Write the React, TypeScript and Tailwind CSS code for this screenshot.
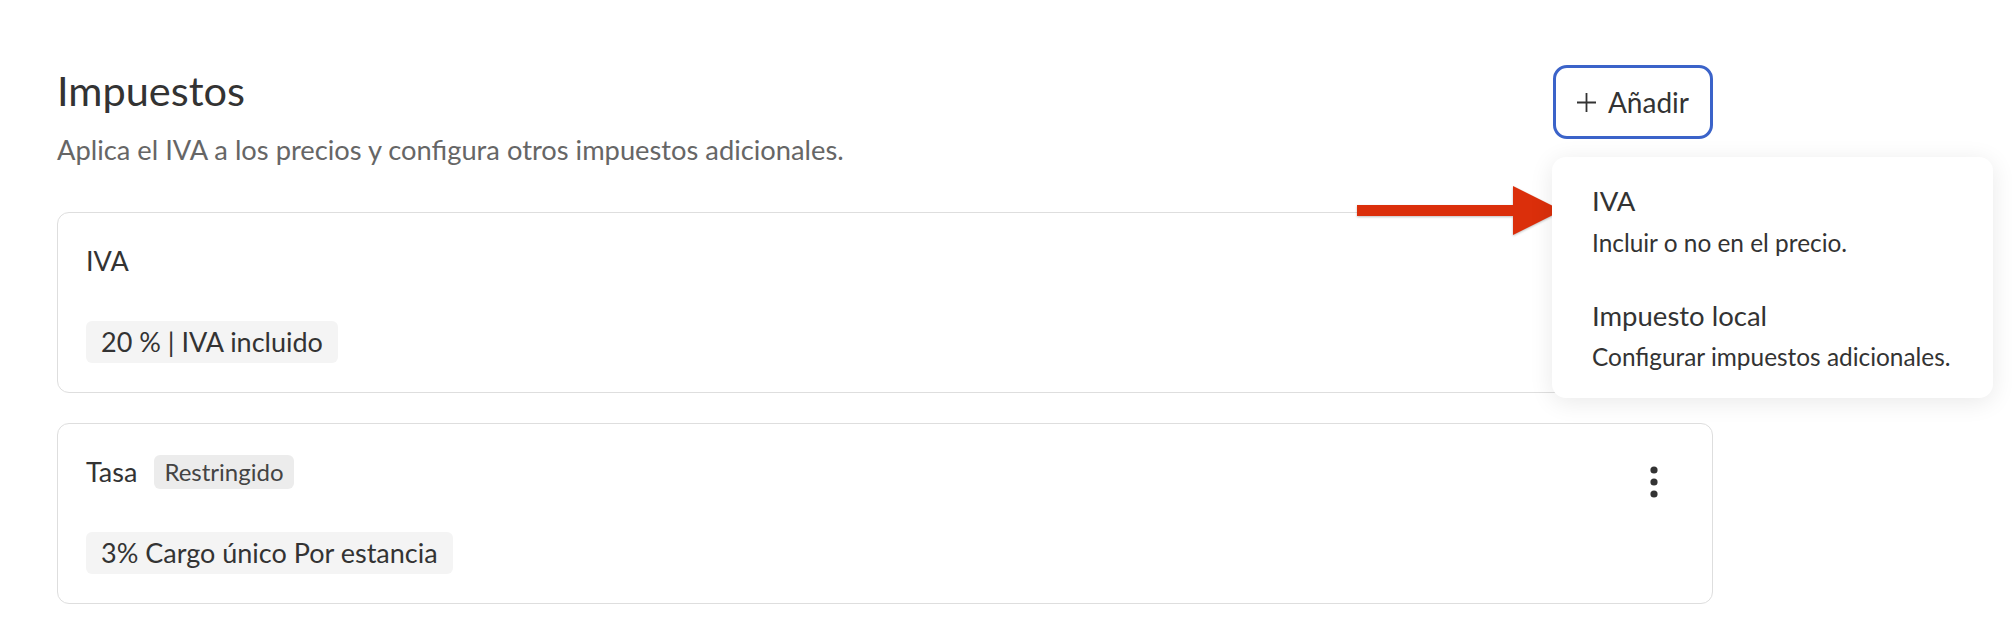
const Kebab = () => (
  <svg width="24" height="40" viewBox="0 0 24 40" className="mt-5 mr-[18px] shrink-0">
    <circle cx="12" cy="8" r="3.6" fill="#333" />
    <circle cx="12" cy="20" r="3.6" fill="#333" />
    <circle cx="12" cy="32" r="3.6" fill="#333" />
  </svg>
);

const Chip = ({ children }: { children: React.ReactNode }) => (
  <span className="inline-flex h-[42px] items-center rounded-[6px] bg-[#f4f4f4] px-[15px] text-[27px] text-[#333]">
    {children}
  </span>
);

const TaxCard = ({
  title,
  badge,
  chip,
}: {
  title: string;
  badge?: string;
  chip: string;
}) => (
  <div className="rounded-[12px] border border-[#dedede] bg-white px-[28px] pt-[28px] pb-[29px]">
    <div className="flex h-[40px] items-center justify-between">
      <div className="flex items-center">
        <span className="text-[27px] leading-[40px] text-[#333]">{title}</span>
        {badge && (
          <span className="ml-[17px] inline-flex h-[34px] items-center rounded-[6px] bg-[#ececec] px-[10px] text-[24px] text-[#444]">
            {badge}
          </span>
        )}
      </div>
      <Kebab />
    </div>
    <div className="mt-[40px] flex">
      <Chip>{chip}</Chip>
    </div>
  </div>
);

export default function App() {
  return (
    <div className="relative h-[640px] w-[2012px] overflow-hidden bg-white font-['Lato',sans-serif]">
      <div className="w-[1713px] pt-[65px] pl-[57px]">
        <div className="flex items-start justify-between">
          <div className="pt-px">
            <h1 className="text-[41.5px] leading-[48px] text-[#333]">Impuestos</h1>
            <p className="mt-[18px] text-[27.3px] leading-[36px] text-[#666]">
              Aplica el IVA a los precios y configura otros impuestos adicionales.
            </p>
          </div>
          <button className="flex h-[74px] w-[160px] items-center justify-center gap-[12px] rounded-[14px] border-[3px] border-[#3b63c9] bg-white text-[28px] text-[#333]">
            <svg width="19" height="19" viewBox="0 0 19 19">
              <path d="M9.5 0v19M0 9.5h19" stroke="#333" strokeWidth="1.8" />
            </svg>
            <span>Añadir</span>
          </button>
        </div>

        <div className="mt-[44px] flex flex-col gap-[30px]">
          <TaxCard title="IVA" chip="20 % | IVA incluido" />
          <TaxCard title="Tasa" badge="Restringido" chip="3% Cargo único Por estancia" />
        </div>
      </div>

      {/* arrow annotation */}
      <svg
        width="210"
        height="54"
        viewBox="0 0 210 54"
        className="absolute left-[1355px] top-[184px] drop-shadow-[0_1px_1px_rgba(0,0,0,0.25)]"
      >
        <rect x="2" y="21" width="160" height="11" fill="#db2f0b" />
        <path d="M158 2 L207 26.5 L158 51 Z" fill="#db2f0b" />
      </svg>

      {/* dropdown menu */}
      <div className="absolute left-[1552px] top-[157px] w-[441px] rounded-[14px] bg-white pt-[28px] pb-[25px] pl-[40px] shadow-[0_4px_24px_rgba(0,0,0,0.09)]">
        <div>
          <div className="text-[27.5px] leading-[32px] text-[#333]">IVA</div>
          <div className="mt-[10px] text-[24.4px] leading-[32px] text-[#333]">Incluir o no en el precio.</div>
        </div>
        <div className="mt-[41px]">
          <div className="text-[27.5px] leading-[32px] text-[#333]">Impuesto local</div>
          <div className="mt-[9px] text-[24.4px] leading-[32px] text-[#333]">Configurar impuestos adicionales.</div>
        </div>
      </div>
    </div>
  );
}
